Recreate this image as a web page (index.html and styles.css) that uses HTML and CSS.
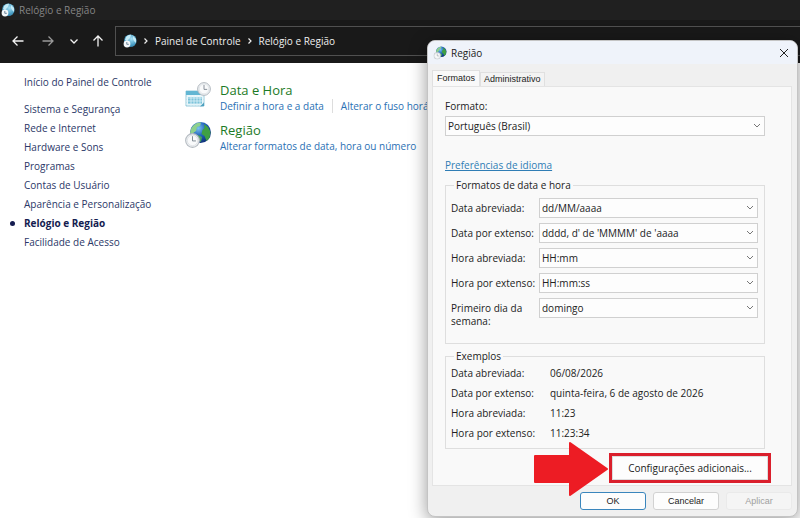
FILE: index.html
```
<!DOCTYPE html>
<html lang="pt-BR">
<head>
    <meta charset="UTF-8">
    <meta name="viewport" content="width=device-width, initial-scale=1.0">
    <title>Relógio e Região</title>
    <link rel="stylesheet" href="styles.css">
</head>
<body>
    <!-- icones usados mais de uma vez -->
    <svg class="sprite" aria-hidden="true">
        <defs>
            <radialGradient id="mar" cx="40%" cy="30%" r="75%">
                <stop offset="0" stop-color="#7cc4ee"/>
                <stop offset=".45" stop-color="#2467c0"/>
                <stop offset="1" stop-color="#0b2a72"/>
            </radialGradient>
            <radialGradient id="gelo" cx="60%" cy="35%" r="75%">
                <stop offset="0" stop-color="#a5e0f4"/>
                <stop offset=".6" stop-color="#4a9fc6"/>
                <stop offset="1" stop-color="#2b7199"/>
            </radialGradient>
        </defs>
        <symbol id="relogio" viewBox="0 0 14 14">
            <circle cx="7" cy="7" r="6.4" fill="#eceff2" stroke="#b4bac0"/>
            <circle cx="7" cy="7" r="4.8" fill="#f9fafb" stroke="#d3d8dc" stroke-width=".5"/>
            <path d="M7 3v4.4h3.2" fill="none" stroke="#7d8791" stroke-width=".9"/>
        </symbol>
        <symbol id="globo" viewBox="0 0 28 28">
            <circle cx="16.5" cy="11.5" r="10.5" fill="url(#mar)"/>
            <path d="M7 8c2-4 6-7 10-6.500l-1 3.500-3 1-1 4-4 3-2-1z" fill="#8ed08c"/>
            <path d="M20 3l4 3 2.500 5-1 6-3 3-2-5-3-2 1-4 2-2z" fill="#3fa044"/>
            <path d="M14 14l4 2-1 5-4-2z" fill="#4aa35c"/>
            <use href="#relogio" x="1" y="12" width="15" height="15"/>
        </symbol>
        <symbol id="globo-claro" viewBox="0 0 14 14">
            <circle cx="7.3" cy="6.8" r="6.3" fill="url(#gelo)"/>
            <path d="M3 3c2-2 4-2.500 5-2l-1 3-3 3-2-1zM10 2l3 3v4l-2-2-1-2z" fill="#c4eaf6"/>
            <circle cx="4" cy="10" r="3.400" fill="#f3f7fa"/>
            <path d="M3.800 8v2.300h2" fill="none" stroke="#4d6b82" stroke-width=".8"/>
        </symbol>
    </svg>

    <div class="janela">
        <div class="titulo">
            <svg class="icone"><use href="#globo-claro"/></svg>
            <span>Relógio e Região</span>
        </div>
        <nav class="barra">
            <button class="nav-btn" aria-label="Voltar"><svg viewBox="0 0 12 12"><path d="M11.500 6H1M5.500 1.500L1 6l4.500 4.500"/></svg></button>
            <button class="nav-btn apagado" aria-label="Avançar"><svg viewBox="0 0 12 12"><path d="M.5 6H11M6.500 1.500L11 6l-4.500 4.500"/></svg></button>
            <button class="nav-btn menor" aria-label="Locais recentes"><svg viewBox="0 0 12 12"><path d="M2.500 4.500L6 8l3.500-3.500"/></svg></button>
            <button class="nav-btn menor" aria-label="Acima"><svg viewBox="0 0 12 12"><path d="M6 11.500V1M1.500 5.500L6 1l4.500 4.500"/></svg></button>
            <div class="endereco">
                <svg class="icone"><use href="#globo-claro"/></svg>
                <svg class="seta-caminho" viewBox="0 0 6 8"><path d="M1.500 1.500L4 4 1.500 6.500"/></svg>
                <a href="#">Painel de Controle</a>
                <svg class="seta-caminho" viewBox="0 0 6 8"><path d="M1.500 1.500L4 4 1.500 6.500"/></svg>
                <a href="#">Relógio e Região</a>
            </div>
        </nav>

        <div class="conteudo">
            <aside class="lateral">
                <a href="#" class="inicio">Início do Painel de Controle</a>
                <ul>
                    <li><a href="#">Sistema e Segurança</a></li>
                    <li><a href="#">Rede e Internet</a></li>
                    <li><a href="#">Hardware e Sons</a></li>
                    <li><a href="#">Programas</a></li>
                    <li><a href="#">Contas de Usuário</a></li>
                    <li><a href="#">Aparência e Personalização</a></li>
                    <li class="atual"><a href="#">Relógio e Região</a></li>
                    <li><a href="#">Facilidade de Acesso</a></li>
                </ul>
            </aside>
            <main class="categorias">
                <section class="categoria">
                    <svg class="icone-grande" viewBox="0 0 28 28">
                        <path d="M2 10h18v15H2z" fill="#eaf7fb" stroke="#7fbdd2" stroke-width=".8"/>
                        <path d="M2 10h18v4H2z" fill="#62b6d3"/>
                        <path d="M4 16h14v7H4z" fill="#7cc3da"/>
                        <path d="M7 14v11M10 14v11M13 14v11M16 14v11M2 17h18M2 20h18M2 23h18" stroke="#dff3f9" stroke-width=".8"/>
                        <path d="M20 25l-4 .5 4-4z" fill="#4c9fbe"/>
                        <use href="#relogio" x="13" y="1" width="14" height="14"/>
                    </svg>
                    <div>
                        <h2><a href="#">Data e Hora</a></h2>
                        <p class="tarefas">
                            <a href="#">Definir a hora e a data</a>
                            <a href="#">Alterar o fuso horário</a>
                        </p>
                    </div>
                </section>
                <section class="categoria">
                    <svg class="icone-grande"><use href="#globo"/></svg>
                    <div>
                        <h2><a href="#">Região</a></h2>
                        <p class="tarefas"><a href="#">Alterar formatos de data, hora ou número</a></p>
                    </div>
                </section>
            </main>
        </div>
    </div>

    <div class="dialogo" role="dialog" aria-labelledby="titulo-dialogo">
        <div class="dialogo-titulo">
            <svg class="icone"><use href="#globo"/></svg>
            <span id="titulo-dialogo">Região</span>
            <button class="fechar" aria-label="Fechar"><svg viewBox="0 0 10 10"><path d="M1 1l8 8M9 1L1 9"/></svg></button>
        </div>
        <div class="abas" role="tablist">
            <button class="aba ativa" role="tab" aria-selected="true">Formatos</button>
            <button class="aba" role="tab" aria-selected="false">Administrativo</button>
        </div>
        <div class="painel" role="tabpanel">
            <label class="rotulo-formato" for="formato">Formato:</label>
            <select id="formato"><option>Português (Brasil)</option></select>
            <a href="#" class="idioma">Preferências de idioma</a>

            <fieldset class="formatos">
                <legend>Formatos de data e hora</legend>
                <div class="grade">
                    <label for="data-curta">Data abreviada:</label>
                    <select id="data-curta"><option>dd/MM/aaaa</option></select>
                    <label for="data-longa">Data por extenso:</label>
                    <select id="data-longa"><option>dddd, d' de 'MMMM' de 'aaaa</option></select>
                    <label for="hora-curta">Hora abreviada:</label>
                    <select id="hora-curta"><option>HH:mm</option></select>
                    <label for="hora-longa">Hora por extenso:</label>
                    <select id="hora-longa"><option>HH:mm:ss</option></select>
                    <label for="primeiro-dia">Primeiro dia da semana:</label>
                    <select id="primeiro-dia"><option>domingo</option></select>
                </div>
            </fieldset>

            <fieldset class="exemplos">
                <legend>Exemplos</legend>
                <dl>
                    <dt>Data abreviada:</dt><dd>06/08/2026</dd>
                    <dt>Data por extenso:</dt><dd>quinta-feira, 6 de agosto de 2026</dd>
                    <dt>Hora abreviada:</dt><dd>11:23</dd>
                    <dt>Hora por extenso:</dt><dd>11:23:34</dd>
                </dl>
            </fieldset>

            <div class="destaque">
                <button class="adicionais">Configurações adicionais...</button>
                <svg class="flecha" viewBox="0 0 74 54"><path d="M1 14h35V1l37 26-37 26V40H1z"/></svg>
            </div>
        </div>
        <div class="rodape">
            <button class="botao padrao">OK</button>
            <button class="botao">Cancelar</button>
            <button class="botao" disabled>Aplicar</button>
        </div>
    </div>
</body>
</html>
```
FILE: styles.css
```
* {
    margin: 0;
    padding: 0;
    box-sizing: border-box;
}
body {
    font-family: "Open Sans", "Noto Sans", sans-serif;
    font-size: 10px;
    line-height: 14px;
    color: #222;
    background-color: #fff;
    min-height: 100vh;
    overflow: hidden;
}
button, select {
    font: inherit;
    color: inherit;
}
a {
    color: inherit;
    text-decoration: none;
}
ul {
    list-style: none;
}
.sprite {
    position: absolute;
    width: 0;
    height: 0;
}
.icone {
    width: 14px;
    height: 14px;
    flex: none;
}

/* janela do painel de controle */
.titulo {
    height: 20px;
    display: flex;
    align-items: center;
    gap: 4px;
    padding-left: 1px;
    background-color: #202020;
    color: #858585;
}
.barra {
    height: 43px;
    display: flex;
    align-items: center;
    padding: 0 0 2px 10px;
    background-color: #191919;
    color: #eee;
}
.nav-btn {
    width: 30px;
    height: 24px;
    padding-left: 2px;
    background: none;
    border: none;
    text-align: left;
}
.nav-btn.apagado {
    width: 26px;
}
.nav-btn.menor {
    width: 24px;
}
.nav-btn svg {
    width: 12px;
    height: 12px;
    display: block;
    fill: none;
    stroke: #f2f2f2;
    stroke-width: 1.3;
}
.nav-btn.apagado svg {
    stroke: #999;
}
.endereco {
    flex: 1;
    height: 30px;
    margin-left: 1px;
    padding-left: 7px;
    display: flex;
    align-items: center;
    gap: 6px;
    border: 1px solid #505050;
    border-right: none;
}
.seta-caminho {
    width: 6px;
    height: 8px;
    fill: none;
    stroke: #eee;
    stroke-width: 1.2;
}
.conteudo {
    display: flex;
    white-space: nowrap;
}
.lateral {
    width: 184px;
    flex: none;
    padding: 12px 0 0 24px;
    color: #2b3768;
}
.inicio {
    display: block;
    margin-bottom: 11px;
}
.lateral li {
    line-height: 19px;
    position: relative;
}
.lateral .atual {
    font-weight: bold;
    color: #141c50;
}
.lateral .atual::before {
    content: '';
    position: absolute;
    left: -14px;
    top: 7px;
    width: 5px;
    height: 5px;
    border-radius: 50%;
    background-color: #141c50;
}
.categorias {
    padding-top: 18px;
}
.categoria {
    display: flex;
    gap: 8px;
    margin-bottom: 8px;
}
.icone-grande {
    width: 28px;
    height: 28px;
    flex: none;
}
.categoria h2 {
    font-size: 13px;
    font-weight: normal;
    line-height: 18px;
    color: #1c7a26;
}
.tarefas {
    display: flex;
    color: #2a70b4;
}
.tarefas a + a {
    margin-left: 8px;
    padding-left: 8px;
    border-left: 1px solid #ddd;
}

/* caixa de dialogo */
.dialogo {
    position: absolute;
    top: 40px;
    right: 2px;
    width: 371px;
    padding-bottom: 6px;
    background-color: #f0f0f0;
    border: 1px solid #c4c4c4;
    border-radius: 8px;
    box-shadow: 0 4px 18px rgba(0, 0, 0, .4);
}
.dialogo-titulo {
    height: 23px;
    display: flex;
    align-items: center;
    gap: 4px;
    padding: 0 6px 0 5px;
    background-color: #eff3fa;
    border-radius: 7px 7px 0 0;
}
.fechar {
    width: 12px;
    height: 12px;
    margin-left: auto;
    background: none;
    border: none;
}
.fechar svg {
    width: 10px;
    height: 10px;
    display: block;
    fill: none;
    stroke: #222;
}
.abas {
    display: flex;
    align-items: flex-end;
    padding: 6px 4px 0;
}
.aba {
    height: 14px;
    padding: 0 3px;
    font-family: "Liberation Sans", Arial, sans-serif;
    font-size: 9px;
    line-height: 13px;
    background-color: #f3f3f3;
    border: 1px solid #e0e0e0;
    border-bottom: none;
}
.aba.ativa {
    height: 16px;
    padding: 0 4px;
    background-color: #f9f9f9;
}
.painel {
    margin: 0 5px 0 4px;
    padding: 12px 26px 2px 12px;
    background-color: #f9f9f9;
    border: 1px solid #e4e4e4;
}
.rotulo-formato {
    display: block;
    margin-bottom: 3px;
}
select {
    appearance: none;
    width: 100%;
    height: 20px;
    padding: 0 16px 0 2px;
    border: 1px solid #d0d0d0;
    border-radius: 0;
    background: #fdfdfd url("data:image/svg+xml,%3Csvg xmlns='http://www.w3.org/2000/svg' width='8' height='6'%3E%3Cpath d='M1 1l3 3 3-3' fill='none' stroke='%23777'/%3E%3C/svg%3E") no-repeat right 3px center;
}
.idioma {
    display: block;
    width: max-content;
    margin: 22px 0 6px;
    color: #2f7db5;
    text-decoration: underline;
}
fieldset {
    min-width: 0;
    border: 1px solid #dedede;
}
legend {
    margin-left: 3px;
    padding: 0 2px;
}
.formatos {
    padding: 6px 6px 25px 5px;
    margin-bottom: 5px;
}
.grade {
    display: grid;
    grid-template-columns: 88px 1fr;
    row-gap: 5px;
}
.grade label {
    padding-top: 4px;
    line-height: 13px;
}
.grade label:last-of-type {
    height: 20px;
}
.exemplos {
    padding: 0 5px 5px;
}
.exemplos dl {
    display: grid;
    grid-template-columns: 99px 1fr;
    line-height: 20px;
}
/* botao marcado com a flecha */
.destaque {
    position: relative;
    width: 162px;
    margin: 4px -6px 0 auto;
    border: 3px solid #da1f2c;
}
.adicionais {
    display: block;
    width: 100%;
    height: 24px;
    background-color: #fdfdfd;
    border: 1px solid #ddd;
}
.flecha {
    position: absolute;
    right: 160px;
    top: -14px;
    width: 74px;
    height: 54px;
    fill: #ed1c24;
    stroke: #ed1c24;
    stroke-width: 2;
    stroke-linejoin: round;
}
.rodape {
    display: flex;
    justify-content: flex-end;
    gap: 7px;
    padding: 6px 5px 0;
}
.botao {
    width: 66px;
    height: 18px;
    font-family: "Liberation Sans", Arial, sans-serif;
    font-size: 9px;
    background-color: #fdfdfd;
    border: 1px solid #d2d2d2;
    border-radius: 3px;
}
.botao.padrao {
    border-color: #3a86bd;
}
.botao:disabled {
    color: #a0a0a0;
    background-color: #f5f5f5;
    border-color: #eaeaea;
}
```
